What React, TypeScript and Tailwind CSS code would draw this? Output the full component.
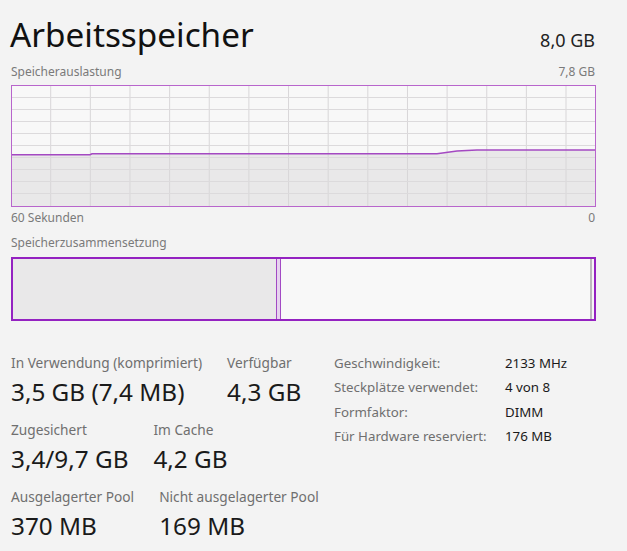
import React from "react";

const font = { fontFamily: '"Noto Sans", "Open Sans", sans-serif' };

function UsageChart() {
  const W = 583;
  const H = 120;
  const vx: number[] = [];
  for (let k = 0; k < 14; k++) vx.push(38.7 + 39.64 * k);
  const hy: number[] = [];
  for (let k = 1; k < 10; k++) hy.push(12 * k - 0.5);
  const pts = "0,68.7 78,68.7 80,67.7 425,67.7 445,65 465,64 583,64";
  return (
    <svg width={W} height={H} viewBox={`0 0 ${W} ${H}`} className="block">
      <rect x="0" y="0" width={W} height={H} fill="#f8f8f8" />
      <polygon points={`${pts} 583,120 0,120`} fill="#e9e8e9" />
      {vx.map((x) => (
        <line key={"v" + x} x1={x} y1={0} x2={x} y2={H} stroke="#d8d6d8" strokeWidth="1" />
      ))}
      {hy.map((y) => (
        <line key={"h" + y} x1={0} y1={y} x2={W} y2={y} stroke="#dcdadc" strokeWidth="1" />
      ))}
      <polyline points={pts} fill="none" stroke="#a449c2" strokeWidth="1.6" />
    </svg>
  );
}

function Stat({ label, value }: { label: string; value: string }) {
  return (
    <div className="flex flex-col">
      <div className="text-[13.7px] leading-[18px] text-[#6f6f6f] whitespace-nowrap">{label}</div>
      <div className="text-[24.3px] leading-[30px] text-[#1a1a1a] whitespace-nowrap mt-[5px]">{value}</div>
    </div>
  );
}

export default function App() {
  return (
    <div className="w-[627px] h-[551px] bg-[#f3f3f3] overflow-hidden pl-[11px] pr-[32px]" style={font}>
      <div className="flex items-baseline justify-between pt-[12px]">
        <div className="text-[33.3px] leading-[44px] text-[#111] ml-[-1px]">Arbeitsspeicher</div>
        <div className="text-[18px] leading-[24px] text-[#222]">8,0 GB</div>
      </div>
      <div className="flex justify-between text-[12px] leading-[18px] text-[#7a7a7a] mt-[7px]">
        <span>Speicherauslastung</span>
        <span>7,8 GB</span>
      </div>
      <div className="border border-[#b865cc] mt-[4px] w-[585px] h-[122px]">
        <UsageChart />
      </div>
      <div className="flex justify-between text-[12px] leading-[18px] text-[#7a7a7a] mt-[2px]">
        <span>60 Sekunden</span>
        <span>0</span>
      </div>
      <div className="text-[12px] leading-[18px] text-[#7a7a7a] mt-[7px]">Speicherzusammensetzung</div>
      <div className="mt-[5px] w-[585px] h-[64px] border-2 border-[#9422c1] flex">
        <div className="w-[263px] h-full bg-[#e9e8e9]" />
        <div className="w-[5px] h-full border-x border-[#a24ac4] bg-[#e6d3ee]" />
        <div className="flex-1 h-full bg-[#f8f8f8]" />
        <div className="w-[2px] h-full bg-[#bdbabd]" />
        <div className="w-[2px] h-full bg-[#f6f6f6]" />
      </div>
      <div className="flex mt-[33px]">
        <div className="w-[323px] flex flex-col gap-[14px]">
          <div className="flex gap-[25px]">
            <Stat label="In Verwendung (komprimiert)" value="3,5 GB (7,4 MB)" />
            <Stat label="Verfügbar" value="4,3 GB" />
          </div>
          <div className="flex gap-[25px]">
            <Stat label="Zugesichert" value="3,4/9,7 GB" />
            <Stat label="Im Cache" value="4,2 GB" />
          </div>
          <div className="flex gap-[25px]">
            <Stat label="Ausgelagerter Pool" value="370 MB" />
            <Stat label="Nicht ausgelagerter Pool" value="169 MB" />
          </div>
        </div>
        <div className="grid grid-cols-[171px_auto] auto-rows-[24.4px] content-start text-[13.3px] leading-[20px] mt-[-1px]">
          <div className="text-[#6f6f6f]">Geschwindigkeit:</div>
          <div className="text-[#1a1a1a]">2133 MHz</div>
          <div className="text-[#6f6f6f]">Steckplätze verwendet:</div>
          <div className="text-[#1a1a1a]">4 von 8</div>
          <div className="text-[#6f6f6f]">Formfaktor:</div>
          <div className="text-[#1a1a1a]">DIMM</div>
          <div className="text-[#6f6f6f]">Für Hardware reserviert:</div>
          <div className="text-[#1a1a1a]">176 MB</div>
        </div>
      </div>
    </div>
  );
}
